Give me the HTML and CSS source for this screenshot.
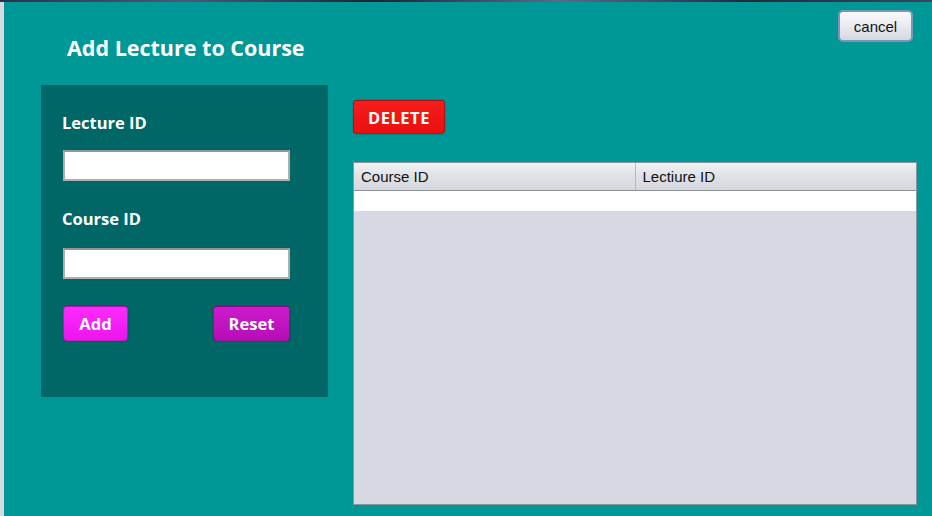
FILE: index.html
```html
<!DOCTYPE html>
<html>
<head>
<meta charset="utf-8">
<link rel="stylesheet" href="styles.css">
</head>
<body>
<div class="topbar"></div>
<div class="window">
  <div class="edge"></div>
  <div class="main">
    <div class="header">
      <h1 class="title">Add Lecture to Course</h1>
      <button class="cancel">cancel</button>
    </div>
    <div class="content">
      <div class="panel">
        <label class="label">Lecture ID</label>
        <input class="field" type="text">
        <label class="label label-second">Course ID</label>
        <input class="field" type="text">
        <div class="actions">
          <button class="btn btn-add">Add</button>
          <button class="btn btn-reset">Reset</button>
        </div>
      </div>
      <div class="right">
        <button class="btn btn-delete">DELETE</button>
        <div class="table">
          <div class="thead">
            <div class="th th-first">Course ID</div>
            <div class="th">Lectiure ID</div>
          </div>
          <div class="row"></div>
          <div class="empty"></div>
        </div>
      </div>
    </div>
  </div>
</div>
</body>
</html>
```

FILE: styles.css
```css
* { box-sizing: border-box; }
html, body { margin: 0; padding: 0; }
body {
  width: 932px;
  height: 516px;
  overflow: hidden;
  display: flex;
  flex-direction: column;
  font-family: "Open Sans", "Liberation Sans", sans-serif;
  background: #009797;
}
.topbar {
  height: 2px;
  background: linear-gradient(90deg, #2a3448, #4a5878 20%, #1d2536 40%, #5b6a8c 60%, #222b3f 80%, #39465f);
}
.window {
  flex: 1;
  display: flex;
}
.edge {
  width: 4px;
  background: #d8dae2;
}
.main {
  flex: 1;
  display: flex;
  flex-direction: column;
  background: #009797;
}
.header {
  height: 83px;
  display: flex;
  justify-content: space-between;
  align-items: flex-start;
}
.title {
  margin: 33px 0 0 63px;
  font-size: 21.5px;
  line-height: 26px;
  font-weight: 700;
  color: #ffffff;
}
.cancel {
  margin: 8px 19px 0 0;
  width: 75px;
  height: 32px;
  border: 2px solid #7d94b4;
  border-radius: 5px;
  background: linear-gradient(#fbfbfd, #e9eaf0 50%, #d6d8e0);
  font-family: "Liberation Sans", Arial, sans-serif;
  font-size: 15px;
  color: #111;
  padding: 0;
}
.content {
  flex: 1;
  display: flex;
  padding: 0 15px 11px 37px;
  gap: 25px;
}
.panel {
  width: 287px;
  height: 312px;
  background: #006766;
  padding: 28px 0 0 21px;
  display: flex;
  flex-direction: column;
  align-items: flex-start;
}
.label {
  font-size: 16.5px;
  line-height: 20px;
  font-weight: 700;
  color: #ffffff;
}
.label-second { margin-top: 28px; }
.field {
  margin: 17px 0 0 1px;
  width: 227px;
  height: 31px;
  border: 2px solid #a9b0b0;
  border-top-color: #8e9696;
  background: #ffffff;
}
.label-second + .field { margin-top: 19px; }
.actions {
  margin: 27px 0 0 1px;
  width: 227px;
  display: flex;
  justify-content: space-between;
}
.btn {
  height: 35px;
  border: 1px solid rgba(0,0,0,0.25);
  border-radius: 4px;
  color: #ffffff;
  font-family: "Open Sans", "Liberation Sans", sans-serif;
  font-weight: 700;
  font-size: 16.5px;
  padding: 0;
  box-shadow: 0 0 2px rgba(0,0,0,0.35);
}
.btn-add {
  width: 65px;
  background: linear-gradient(#fb2cfb, #ee14ee);
}
.btn-reset {
  width: 77px;
  background: linear-gradient(#cc1ccc, #b80cb8);
}
.right {
  flex: 1;
  padding-top: 15px;
  display: flex;
  flex-direction: column;
  align-items: flex-start;
}
.btn-delete {
  width: 92px;
  height: 34px;
  background: linear-gradient(#f51d1d, #ec0f0f);
  letter-spacing: 0.5px;
}
.table {
  margin-top: 28px;
  align-self: stretch;
  flex: 1;
  display: flex;
  flex-direction: column;
  border: 1px solid #8a95a0;
  background: #d6d9e1;
}
.thead {
  height: 28px;
  display: flex;
  background: linear-gradient(#f1f2f5, #dfe1e6 50%, #d6d8de);
  border-bottom: 1px solid #8a929c;
}
.th {
  flex: 1;
  font-family: "Liberation Sans", Arial, sans-serif;
  font-size: 15px;
  line-height: 27px;
  color: #111;
  padding-left: 7px;
}
.th-first { border-right: 1px solid #b4b8c0; }
.row {
  height: 20px;
  background: #ffffff;
}
.empty { flex: 1; }
```
